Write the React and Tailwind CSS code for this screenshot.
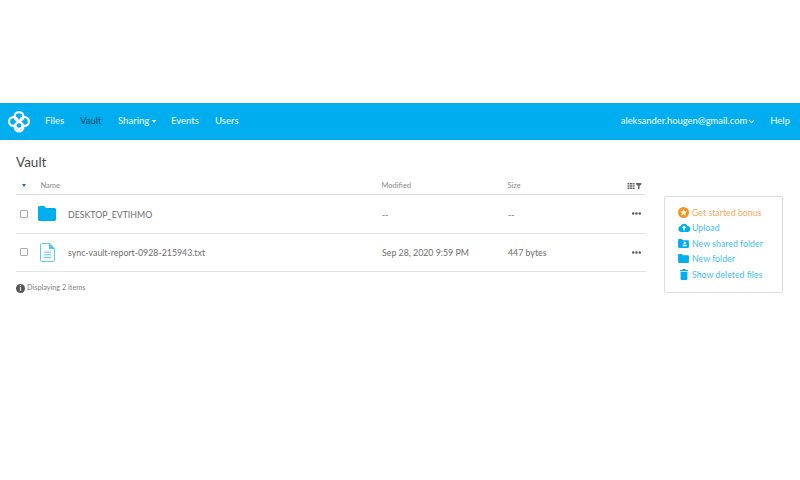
import { ChevronDown } from 'lucide-react';

function Logo() {
  return (
    <svg width="22" height="22" viewBox="0 0 22 22" fill="none" stroke="white" strokeWidth="2.200">
      <circle cx="11" cy="5.500" r="4.400" />
      <circle cx="5.500" cy="10.500" r="4.400" />
      <circle cx="16.500" cy="10.500" r="4.400" />
      <circle cx="11" cy="16" r="4.400" />
      <circle cx="11" cy="14.500" r="3.400" fill="#00adef" />
    </svg>
  );
}

function FolderIcon({ w = 18, h = 15 }) {
  return (
    <svg width={w} height={h} viewBox="0 0 18 15" fill="#00adef">
      <path d="M0 1.500C0 .7.7 0 1.500 0h4.800l1.700 2h8.500c.8 0 1.500.7 1.500 1.500v10c0 .8-.7 1.500-1.500 1.500h-15C.7 15 0 14.300 0 13.500z" />
    </svg>
  );
}

function TextFileIcon() {
  return (
    <svg width="15" height="19" viewBox="0 0 16 20" fill="none" stroke="#4cc3f2" strokeWidth="1">
      <path d="M1.500.5h8.500l5.500 5.500v12.500a1 1 0 0 1-1 1h-13a1 1 0 0 1-1-1v-17a1 1 0 0 1 1-1z" />
      <path d="M10 .5v5.500h5.500" fill="#4cc3f2" />
      <path d="M4 9.500h8M4 12.500h8M4 15.500h8" />
    </svg>
  );
}

function Dots() {
  return (
    <svg width="9" height="3" viewBox="0 0 9 3" className="mr-[5px]" fill="#555">
      <circle cx="1.200" cy="1.500" r="1.200" />
      <circle cx="4.500" cy="1.500" r="1.200" />
      <circle cx="7.800" cy="1.500" r="1.200" />
    </svg>
  );
}

function Row({ icon, name, modified, size }) {
  return (
    <div className="flex items-center h-[38.500px] border-b border-[#e3e3e3] text-[#6e6e6e] text-[8.800px]">
      <span className="w-[8px] h-[8px] ml-[4px] border border-[#aaa] rounded-[1px] shrink-0" />
      <div className="w-[18px] ml-[10px] mr-[12px] flex justify-center shrink-0">{icon}</div>
      <div className="w-[314px] shrink-0 pt-[1px]">{name}</div>
      <div className="w-[126px] shrink-0 pt-[1px]">{modified}</div>
      <div className="flex-1 pt-[1px]">{size}</div>
      <Dots />
    </div>
  );
}

function SideLink({ icon, children, orange }) {
  return (
    <div className={`flex items-center h-[15.500px] text-[8.800px] ${orange ? 'text-[#f9a85a]' : 'text-[#45bdf0]'}`}>
      <div className="w-[11px] flex justify-center shrink-0 mr-[3px]">{icon}</div>
      {children}
    </div>
  );
}

export default function App() {
  return (
    <div className="w-[800px] h-[480px] overflow-hidden bg-white pt-[103px] font-['Lato',sans-serif]">
      <div className="h-[37px] bg-[#00adef] flex items-center text-[#e6f7fd] text-[9.500px] font-medium">
        <div className="ml-[8px] mr-[15px] flex"><Logo /></div>
        <span className="w-[35px]">Files</span>
        <span className="w-[38px] text-[#0d4f74]">Vault</span>
        <span className="w-[53px] flex items-center">
          Sharing
          <span className="ml-[3px] border-x-[2.500px] border-t-[3px] border-x-transparent border-t-white" />
        </span>
        <span className="w-[44px]">Events</span>
        <span>Users</span>
        <span className="ml-auto flex items-center text-[9.400px]">
          aleksander.hougen@gmail.com
          <ChevronDown size={9} strokeWidth={3} className="ml-[0px]" />
        </span>
        <span className="ml-[14px] mr-[10px]">Help</span>
      </div>

      <div className="flex pl-[16px]">
        <div className="w-[630px] shrink-0">
          <h1 className="mt-[14px] text-[13.500px] leading-[16px] font-normal text-[#4a4a4a]">Vault</h1>
          <div className="flex items-center h-[23px] mt-[2px] pt-[5px] text-[7.500px] text-[#8a8a8a] border-b border-[#ddd]">
            <span className="ml-[6px] border-x-[2.500px] border-t-[3px] border-x-transparent border-t-[#2a6db0] shrink-0" />
            <span className="ml-[14.500px] w-[341px] shrink-0">Name</span>
            <span className="w-[126px] shrink-0">Modified</span>
            <span className="flex-1">Size</span>
            <svg width="15" height="6" viewBox="0 0 14 6" className="mr-[4px]" fill="#666">
              <path d="M0 0h2v1.500H0zM2.500 0h2v1.500h-2zM5 0h2v1.500H5zM0 2.200h2v1.500H0zM2.500 2.200h2v1.500h-2zM5 2.200h2v1.500H5zM0 4.400h2V6H0zM2.500 4.400h2V6h-2zM5 4.400h2V6H5z" />
              <path d="M8.500 0H14v1.200L12 3v3h-1.500V3L8.500 1.200z" />
            </svg>
          </div>
          <Row icon={<FolderIcon />} name="DESKTOP_EVTIHMO" modified="--" size="--" />
          <Row icon={<TextFileIcon />} name="sync-vault-report-0928-215943.txt" modified="Sep 28, 2020 9:59 PM" size="447 bytes" />
          <div className="flex items-center mt-[11px] text-[7.300px] text-[#808080]">
            <span className="w-[9px] h-[9px] rounded-full bg-[#555] text-white text-[7px] leading-[9px] text-center font-bold mr-[2px]">i</span>
            Displaying 2 items
          </div>
        </div>

        <div className="ml-[18px] mt-[56px] w-[119px] h-[97px] border border-[#ddd] rounded-[2px] pl-[13px] pt-[7.500px]">
          <SideLink orange icon={
            <svg width="11" height="11" viewBox="0 0 11 11">
              <circle cx="5.500" cy="5.500" r="5.500" fill="#f7941d" />
              <path d="M5.500 2l1 2.300 2.400.2-1.800 1.600.6 2.400-2.200-1.300-2.200 1.300.6-2.400L2.100 4.500l2.400-.2z" fill="white" />
            </svg>
          }>Get started bonus</SideLink>
          <SideLink icon={
            <svg width="12" height="9" viewBox="0 0 12 9" className="shrink-0">
              <path d="M3 9a3 3 0 0 1-.4-5.900A3.700 3.700 0 0 1 9.500 3 3 3 0 0 1 9 9z" fill="#00adef" />
              <path d="M6 2.500L8.300 5H6.800v2.500H5.200V5H3.700z" fill="white" />
            </svg>
          }>Upload</SideLink>
          <SideLink icon={
            <svg width="11" height="9" viewBox="0 0 18 15">
              <path d="M0 1.500C0 .7.7 0 1.500 0h4.800l1.700 2h8.500c.8 0 1.500.7 1.500 1.500v10c0 .8-.7 1.500-1.500 1.500h-15C.7 15 0 14.300 0 13.500z" fill="#00adef" />
              <circle cx="11" cy="6.500" r="2" fill="white" />
              <path d="M7.500 12c0-2 1.500-3 3.500-3s3.500 1 3.500 3z" fill="white" />
            </svg>
          }>New shared folder</SideLink>
          <SideLink icon={<FolderIcon w={11} h={9} />}>New folder</SideLink>
          <SideLink icon={
            <svg width="8" height="11" viewBox="0 0 8 11" fill="#00adef">
              <path d="M0 1h2.500V0h3v1H8v1.300H0zM.6 3h6.800v7.200a.8.8 0 0 1-.8.800H1.400a.8.8 0 0 1-.8-.8z" />
            </svg>
          }>Show deleted files</SideLink>
        </div>
      </div>
    </div>
  );
}
